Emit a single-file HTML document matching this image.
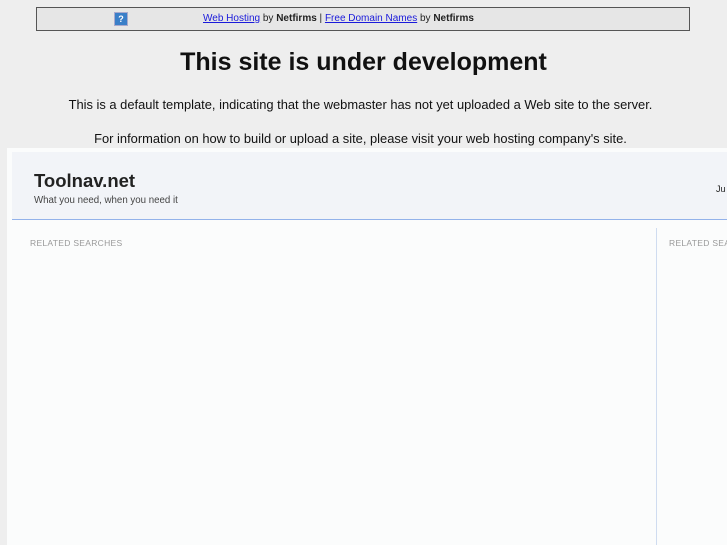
<!DOCTYPE html>
<html><head><style>
body{margin:0;width:727px;height:545px;background:#eeeeee;font-family:"Liberation Sans",sans-serif;position:relative;overflow:hidden}
.bar{position:absolute;left:36px;top:7px;width:652px;height:22px;border:1px solid #555;background:#e6e6e6;font-size:10px;color:#222}
.bar .t{position:absolute;left:166px;top:5px}
.bar a{color:#1a1adb;text-decoration:underline}
.q{position:absolute;left:77px;top:4px;width:12px;height:12px;background:#3a7fc8;border:1px solid #aac;color:#fff;font-size:9px;font-weight:bold;text-align:center;line-height:12px}
h1{position:absolute;top:48px;left:0;width:727px;text-align:center;margin:0;font-size:25px;font-weight:bold;color:#111}
.p{position:absolute;left:0;width:721px;text-align:center;font-size:12.9px;color:#111}
.frame{position:absolute;left:7px;top:148px;width:720px;height:397px;background:#fbfcfc}
.hdr{position:absolute;left:5px;top:4px;width:715px;height:67px;background:#f2f4f8;border-bottom:1px solid #93b2ea}
.logo{position:absolute;left:22px;top:18px;font-size:18.5px;font-weight:bold;color:#222}
.tag{position:absolute;left:22px;top:43px;font-size:9.7px;color:#444}
.ju{position:absolute;left:704px;top:32px;font-size:9px;color:#222}
.rs{position:absolute;top:90px;font-size:8.5px;color:#999;letter-spacing:0.3px;white-space:nowrap}
.vl{position:absolute;left:649px;top:80px;width:1px;height:317px;background:#cfdcf0}
</style></head><body>
<div class="bar"><div class="q">?</div><div class="t"><a>Web Hosting</a> by <b>Netfirms</b> | <a>Free Domain Names</a> by <b>Netfirms</b></div></div>
<h1>This site is under development</h1>
<div class="p" style="top:97px">This is a default template, indicating that the webmaster has not yet uploaded a Web site to the server.</div>
<div class="p" style="top:131px">For information on how to build or upload a site, please visit your web hosting company's site.</div>
<div class="frame">
<div class="hdr"><div class="logo">Toolnav.net</div><div class="tag">What you need, when you need it</div><div class="ju">Ju</div></div>
<div class="rs" style="left:23px">RELATED SEARCHES</div>
<div class="vl"></div>
<div class="rs" style="left:662px">RELATED SEARCHES</div>
</div>
</body></html>
